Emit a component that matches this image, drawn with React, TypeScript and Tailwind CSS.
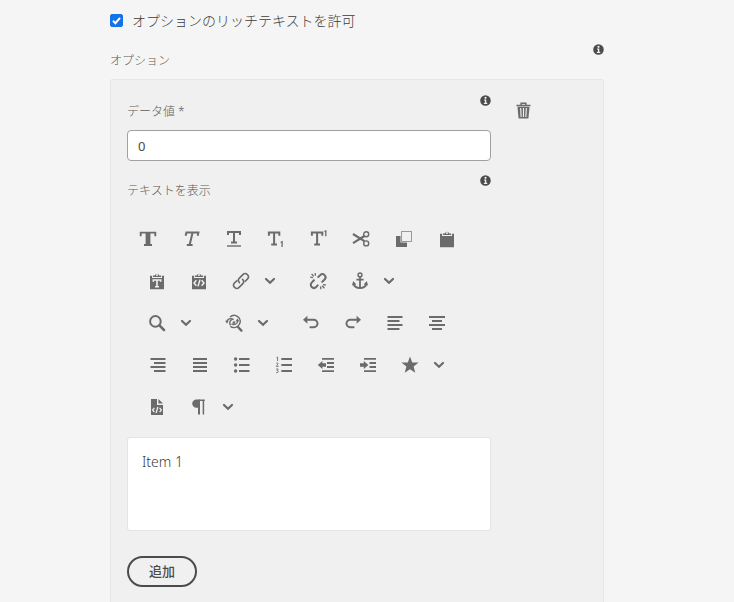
import React, { useState } from "react";

type IconName = keyof typeof shapes;

const clipboard = (
  <path
    fill="currentColor"
    d="M2 3.800h2v2.200h10V3.800h2V17.200H2zM4.900 5.100V3.400h1.900a2.300 2.300 0 0 1 4.400 0h1.900v1.700zM9 2a1 1 0 1 0 0 2 1 1 0 0 0 0-2z"
    fillRule="evenodd"
  />
);

const shapes = {
  bold: (
    <>
      <path d="M1.7 6.2V2.6h14.6v3.6M5 15h8" strokeWidth="1.9" />
      <path d="M9 2.6v12.400" strokeWidth="4.8" />
    </>
  ),
  italic: <path d="M3.600 5.800l.8-3.200h12l-.7 3.200M10.600 2.600L7.6 15M4.800 15h5.8" strokeWidth="2" />,
  underline: (
    <>
      <path d="M3 5V2h12v3M9 2v10.600M6 12.6h6" strokeWidth="2" />
      <path d="M2 16h14" strokeWidth="1.4" />
    </>
  ),
  subscript: (
    <>
      <path d="M1.9 5.8V2.600h10.4v3.200M7.100 2.600V14.400M4.2 14.400h5.8" strokeWidth="2" />
      <path d="M13.7 12.4l1.4-.6V17" strokeWidth="1.3" />
    </>
  ),
  superscript: (
    <>
      <path d="M1.9 5.8V2.600h10.4v3.200M7.100 2.600V14.400M4.2 14.400h5.8" strokeWidth="2" />
      <path d="M14.400 1.600l1.400-.6v5.2" strokeWidth="1.3" />
    </>
  ),
  cut: (
    <>
      <path d="M1 4l11.400 7.200M1 13.200L12.400 6" strokeWidth="2.1" />
      <circle cx="14.200" cy="4.200" r="2.5" strokeWidth="1.4" />
      <circle cx="14.200" cy="13.4" r="2.5" strokeWidth="1.4" />
    </>
  ),
  copy: (
    <>
      <path d="M1 6h4.5v6.500H12V17H1z" fill="currentColor" stroke="none" />
      <rect x="6.5" y="1.5" width="10" height="10" strokeWidth="1" opacity=".65" />
    </>
  ),
  paste: <g stroke="none">{clipboard}</g>,
  pasteText: (
    <>
      <g stroke="none">{clipboard}</g>
      <path d="M5.3 9.800V8h7.4v1.800M9 8v6.6M7 14.800h4" stroke="#f0f0f0" strokeWidth="1.6" />
    </>
  ),
  pasteCode: (
    <>
      <g stroke="none">{clipboard}</g>
      <path d="M6.4 8.3L4 11l2.4 2.7M11.6 8.3L14 11l-2.4 2.7M10 7.6l-2 6.8" stroke="#f0f0f0" strokeWidth="1.5" />
    </>
  ),
  link: (
    <g strokeWidth="1.6" strokeLinecap="round">
      <path d="M7.4 10.6a3.2 3.2 0 0 1 0-4.5l3.5-3.5a3.1 3.1 0 0 1 4.5 4.5l-2.2 2.2" />
      <path d="M10.6 7.4a3.2 3.2 0 0 1 0 4.5l-3.5 3.5a3.1 3.1 0 0 1-4.5-4.5l2.2-2.2" />
    </g>
  ),
  unlink: (
    <>
      <path
        d="M9.300 5l1.900-1.900a3 3 0 0 1 4.400 4.400l-2.400 2.400M8.700 13.4l-1.6 1.600a3 3 0 0 1-4.400-4.400l2.200-2.300"
        strokeWidth="2"
        strokeLinecap="round"
      />
      <path d="M1.2 5.200l2.8.4M2.6 2l2.2 2.4M6.2 1l.2 2.8M16.8 13l-2.800-.4M15.4 16.200l-2.2-2.400M11.8 17.200l-.2-2.800" strokeWidth="1.3" />
    </>
  ),
  anchor: (
    <>
      <circle cx="9" cy="3" r="1.9" strokeWidth="1.5" />
      <path d="M9 4.900V16M5.4 7.600h7.2" strokeWidth="1.8" />
      <path d="M2.600 11.400c.4 3 3 4.600 6.400 4.600s6-1.600 6.400-4.600" strokeWidth="2" />
      <path d="M2.2 9L5.400 12.400 1 13.400zM15.800 9l-3.200 3.400 4.400 1z" fill="currentColor" stroke="none" />
    </>
  ),
  find: (
    <>
      <circle cx="7.4" cy="7.4" r="5.300" strokeWidth="2" />
      <path d="M11.400 11.400l4.6 4.600" strokeWidth="2.5" strokeLinecap="round" />
    </>
  ),
  replace: (
    <>
      <path d="M5 3a6 6 0 0 1 9.400 7.200A6 6 0 0 1 5.400 12.400" strokeWidth="1.4" />
      <path d="M13 13l3.4 3.6" strokeWidth="2.4" strokeLinecap="round" />
      <path d="M1.800 8C2 4.800 5.600 3.600 8.600 5.600M12.600 6.600c.2 3.200-3.200 4.800-6 3.200M7.400 5.400C4.800 6 4 9 5.600 11.400" strokeWidth="1.4" />
      <path d="M.2 6.800l3.600-.2L2 9.800zM10.400 7.400l2-3 2 2.800zM7.600 8.600a1.300 1.300 0 1 0 2.600 0 1.300 1.300 0 0 0-2.600 0z" fill="currentColor" stroke="none" />
    </>
  ),
  undo: (
    <>
      <path d="M4 5.8h7.8a3.700 3.700 0 0 1 0 7.400H8.400" strokeWidth="2" strokeLinecap="round" />
      <path d="M5.4 1.800v8L1 5.800z" fill="currentColor" stroke="none" />
    </>
  ),
  redo: (
    <>
      <path d="M14 5.8H6.2a3.700 3.700 0 0 0 0 7.400h3.400" strokeWidth="2" strokeLinecap="round" />
      <path d="M12.600 1.800v8L17 5.800z" fill="currentColor" stroke="none" />
    </>
  ),
  alignLeft: <path d="M1.5 3H16.500M1.5 7h12M1.5 11H16.500M1.5 15h12" strokeWidth="1.9" />,
  alignCenter: <path d="M1 3h16M4 7h10M1 11h16M4 15h10" strokeWidth="1.9" />,
  alignRight: <path d="M1.5 3h15M5 7h11.5M1.5 11h15M5 15h11.5" strokeWidth="1.9" />,
  justify: <path d="M2 3h14M2 7h14M2 11h14M2 15h14" strokeWidth="2" />,
  bullets: (
    <>
      <path d="M6 3h10.5M6 9h10.5M6 15h10.5" strokeWidth="2" />
      <g fill="currentColor" stroke="none">
        <circle cx="2.6" cy="3" r="1.7" />
        <circle cx="2.6" cy="9" r="1.7" />
        <circle cx="2.6" cy="15" r="1.7" />
      </g>
    </>
  ),
  numbers: (
    <>
      <path d="M6.3 3H17M6.3 9H17M6.3 15H17" strokeWidth="2" />
      <path d="M1.6 1.6L2.6 1v4M1.2 7.2c1-.8 2-.2 1.8.7-.1.8-1.5 1.5-1.7 2.5H3.6M1.2 13h2L2 14.6c2 0 1.9 2.4-.8 2" strokeWidth=".9" />
    </>
  ),
  outdent: (
    <>
      <path d="M5 2.8h12M10 7h7M10 11h7M5 15.200h12" strokeWidth="1.8" />
      <path d="M5.4 4.900v2.400H9v3.400H5.400v2.400L.8 9z" fill="currentColor" stroke="none" />
    </>
  ),
  indent: (
    <>
      <path d="M5 2.8h12M10.5 7H17M10.5 11H17M5 15.200h12" strokeWidth="1.8" />
      <path d="M4.800 4.900v2.400H1v3.400h3.800v2.400L9.400 9z" fill="currentColor" stroke="none" />
    </>
  ),
  star: (
    <path
      d="M9 .4l2.200 6 6.400.2-5 4 1.700 6.200L9 13.300l-5.300 3.500 1.700-6.200-5-4 6.400-.2z"
      fill="currentColor"
      stroke="none"
    />
  ),
  source: (
    <>
      <path d="M3 1h6v6h6v10H3zM10.4 1l4.6 4.6h-4.6z" fill="currentColor" stroke="none" />
      <path d="M6.4 9.8L4.6 12l1.8 2.2M11.6 9.8l1.8 2.2-1.8 2.2M9.9 9l-1.8 6" stroke="#f0f0f0" strokeWidth="1.3" />
    </>
  ),
  paragraph: (
    <>
      <path d="M10 1.400v15.200H8V9.800H6.400A4.200 4.200 0 0 1 6.400 1.400z" fill="currentColor" stroke="none" />
      <path d="M9 2.200h5.800M13.400 1.600v15" strokeWidth="1.5" />
    </>
  ),
  chevron: <path d="M5 7l4 3.800L13 7" strokeWidth="2.200" strokeLinecap="round" />,
  trash: (
    <>
      <path d="M1.600 3.600h14.800M6.500 3V1.300h5V3" strokeWidth="1.600" />
      <path d="M2.600 5h12.800l-1.200 12.400H3.800z" fill="currentColor" stroke="none" />
      <path d="M6 6.400l.5 9.400M9 6.400v9.400M12 6.400l-.5 9.400" stroke="#f0f0f0" strokeWidth="1.200" />
    </>
  ),
  info: (
    <>
      <circle cx="9" cy="9" r="8.600" fill="currentColor" stroke="none" />
      <circle cx="9" cy="4.700" r="1.800" fill="#f0f0f0" stroke="none" />
      <path d="M6.800 8.400H9.200v5.200M6.300 13.800h5.600" stroke="#f0f0f0" strokeWidth="2.200" />
    </>
  ),
};

function Icon({ name, className = "size-[18px]" }: { name: IconName; className?: string }) {
  return (
    <svg viewBox="0 0 18 18" className={className} fill="none" stroke="currentColor" aria-hidden="true">
      {shapes[name]}
    </svg>
  );
}

function Tool({ name, label, className = "w-[42px]" }: { name: IconName; label: string; className?: string }) {
  return (
    <button type="button" aria-label={label} className={`flex h-[42px] items-center justify-center ${className}`}>
      <Icon name={name} />
    </button>
  );
}

function More({ label }: { label: string }) {
  return (
    <button type="button" aria-label={label} className="mr-[19px] flex h-[42px] w-4 items-center justify-center">
      <Icon name="chevron" className="size-[18px] shrink-0" />
    </button>
  );
}

function Info({ label, className = "" }: { label: string; className?: string }) {
  return (
    <button type="button" aria-label={label} className={`text-[#4b4b4b] ${className}`}>
      <Icon name="info" className="size-[11px]" />
    </button>
  );
}

export default function App() {
  const [rich, setRich] = useState(true);
  const [value, setValue] = useState("0");
  const [text, setText] = useState("Item 1");

  return (
    <main className="flex min-h-screen flex-col bg-[#f5f5f5] pr-[130px] pl-[110px] font-['Noto_Sans','Noto_Sans_CJK_JP',sans-serif] text-[#5c5c5c]">
      <label className="flex h-[41px] items-center gap-[9px] text-[14px] text-[#3c3c3c]">
        <span className="relative flex size-[13px]">
          <input
            type="checkbox"
            checked={rich}
            onChange={(e) => setRich(e.target.checked)}
            className="peer size-[13px] appearance-none rounded-[2px] border border-[#767676] bg-white checked:border-[#1473e6] checked:bg-[#1473e6]"
          />
          <svg viewBox="0 0 13 13" className="pointer-events-none absolute inset-0 hidden peer-checked:block" fill="none" stroke="#fff" strokeWidth="2">
            <path d="M3 6.800l2.400 2.400L10 3.900" />
          </svg>
        </span>
        <span className="font-light">オプションのリッチテキストを許可</span>
      </label>

      <div className="flex h-[38px] items-start justify-between">
        <h2 className="pt-[10px] text-[12px] leading-5 font-light">オプション</h2>
        <Info label="オプションの情報" className="pt-[3px]" />
      </div>

      <section className="flex flex-1 items-start gap-6 rounded-t-[3px] border border-b-0 border-[#e6e6e6] bg-[#f0f0f0] pt-[15px] pr-[71px] pb-3 pl-4">
        <div className="min-w-0 flex-1">
          <div className="flex h-[35px] items-start justify-between">
            <label htmlFor="data-value" className="pt-[7px] text-[12px] leading-5 font-light">
              データ値 *
            </label>
            <Info label="データ値の情報" />
          </div>
          <input
            id="data-value"
            value={value}
            onChange={(e) => setValue(e.target.value)}
            className="block h-[31px] w-full rounded-[4px] border border-[#a0a0a0] bg-white px-[10px] text-[13px] text-[#4b4b4b]"
          />

          <div className="flex h-[57px] items-start justify-between">
            <label htmlFor="display-text" className="pt-5 text-[12px] leading-5 font-light">
              テキストを表示
            </label>
            <Info label="テキストの情報" className="pt-[14px]" />
          </div>

          <div role="toolbar" aria-label="書式" className="text-[#6b6b6b]">
            <div className="flex w-[341px]">
              <Tool className="flex-1" name="bold" label="太字" />
              <Tool className="flex-1" name="italic" label="斜体" />
              <Tool className="flex-1" name="underline" label="下線" />
              <Tool className="flex-1" name="subscript" label="下付き" />
              <Tool className="flex-1" name="superscript" label="上付き" />
              <Tool className="flex-1" name="cut" label="切り取り" />
              <Tool className="flex-1" name="copy" label="コピー" />
              <Tool className="flex-1" name="paste" label="貼り付け" />
            </div>
            <div className="flex pl-[9px]">
              <Tool name="pasteText" label="テキストとして貼り付け" />
              <Tool name="pasteCode" label="コードとして貼り付け" />
              <Tool name="link" label="リンク" />
              <More label="リンクのオプション" />
              <Tool name="unlink" label="リンク解除" />
              <Tool name="anchor" label="アンカー" />
              <More label="アンカーのオプション" />
            </div>
            <div className="flex pl-[9px]">
              <Tool name="find" label="検索" />
              <More label="検索のオプション" />
              <Tool name="replace" label="置換" />
              <More label="置換のオプション" />
              <Tool name="undo" label="元に戻す" />
              <Tool name="redo" label="やり直し" />
              <Tool name="alignLeft" label="左揃え" />
              <Tool name="alignCenter" label="中央揃え" />
            </div>
            <div className="flex pl-[10px]">
              <Tool name="alignRight" label="右揃え" />
              <Tool name="justify" label="両端揃え" />
              <Tool name="bullets" label="箇条書き" />
              <Tool name="numbers" label="番号付きリスト" />
              <Tool name="outdent" label="インデント解除" />
              <Tool name="indent" label="インデント" />
              <Tool name="star" label="特殊文字" />
              <More label="特殊文字のオプション" />
            </div>
            <div className="flex pl-[9px]">
              <Tool name="source" label="ソース編集" />
              <Tool name="paragraph" label="段落" />
              <More label="段落のオプション" />
            </div>
          </div>

          <textarea
            id="display-text"
            value={text}
            onChange={(e) => setText(e.target.value)}
            className="mt-[9px] block h-[94px] w-full resize-none rounded-[3px] border border-[#e4e4e4] bg-white px-[14px] py-[14px] text-[14px] leading-5 font-light text-[#3c3c3c]"
          />

          <button
            type="button"
            className="mt-[25px] h-[31px] rounded-full border-2 border-[#4b4b4b] px-5 pb-[2px] text-[13px] leading-5 font-medium text-[#4b4b4b]"
          >
            追加
          </button>
        </div>
        <button type="button" aria-label="削除" className="mt-[7px] text-[#6b6b6b]">
          <Icon name="trash" className="size-[17px]" />
        </button>
      </section>
    </main>
  );
}
